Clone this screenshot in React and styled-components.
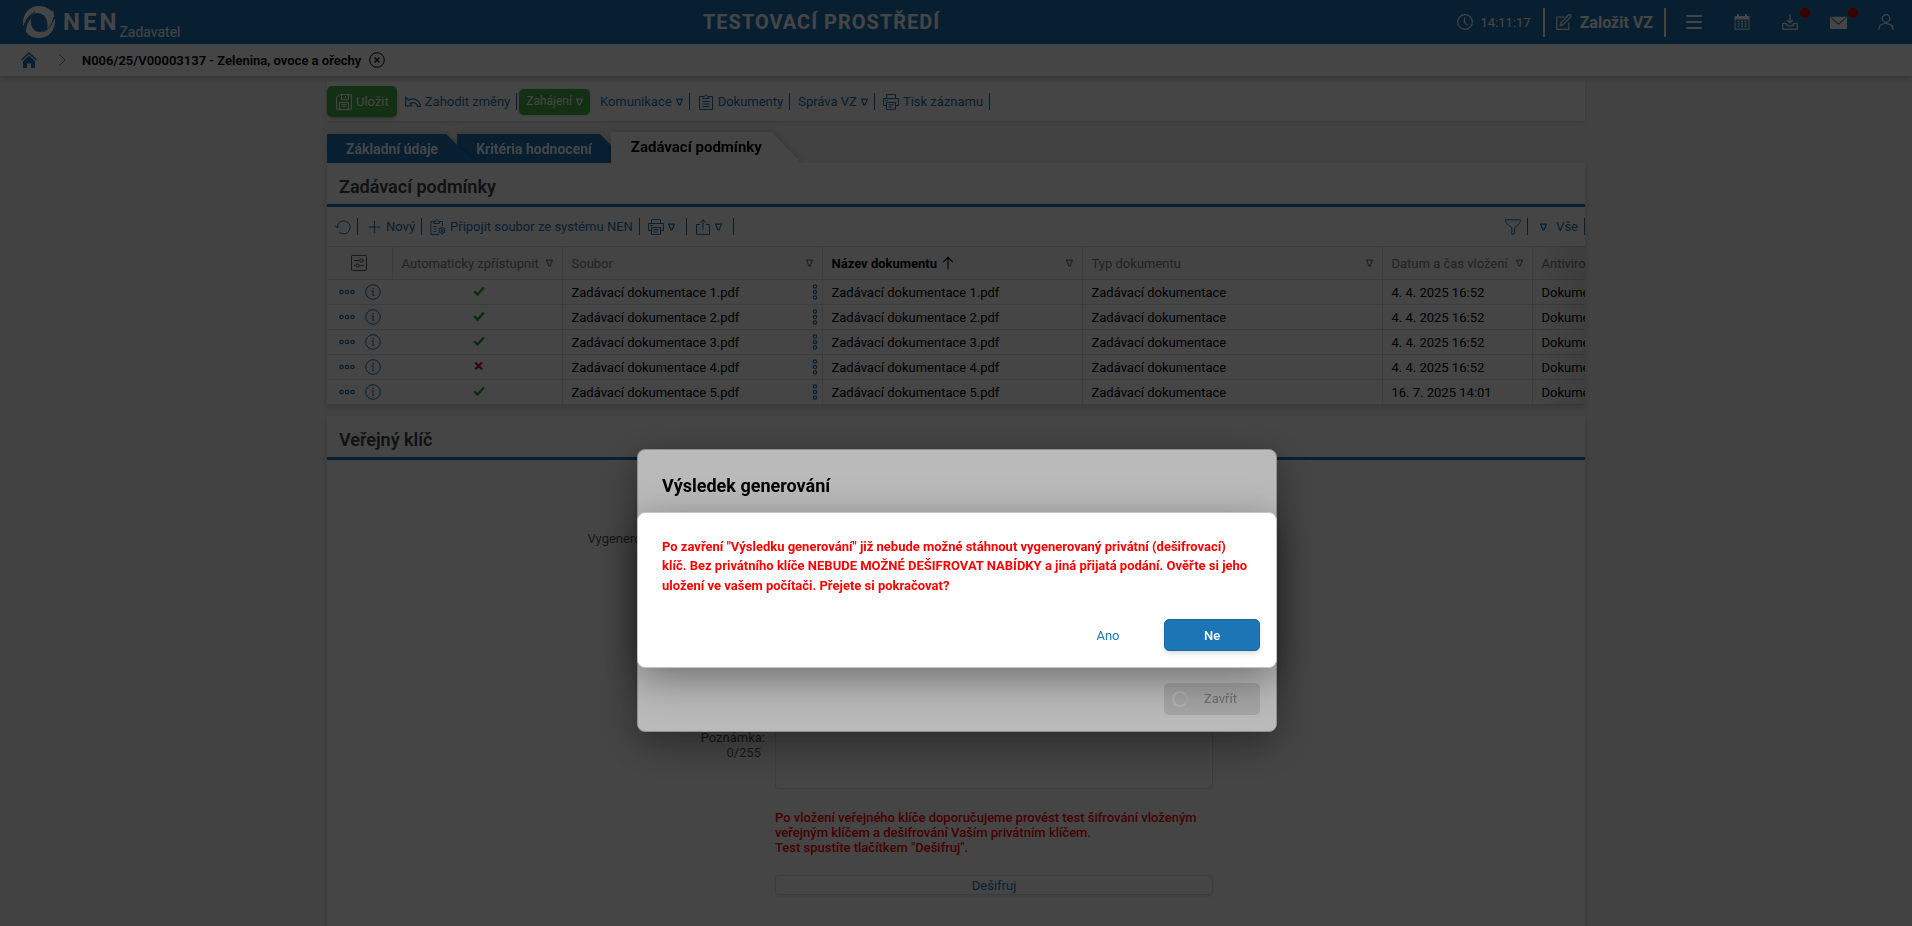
import React, { useState } from 'react';
import styled, { createGlobalStyle, css } from 'styled-components';

const COLORS = {
  BLUE: '#1c75b5',
  GREEN: '#48ad4c',
  RED: '#ff0000',
  WHITE: '#ffffff',
  PAGE: '#f2f2f2',
  LINE: '#dedede',
  GRAY: '#7d7d7d',
  HEADING: '#3c4247',
};

const DOCUMENTS = [
  { id: 1, name: 'Zadávací dokumentace 1.pdf', shared: true, date: '4. 4. 2025 16:52' },
  { id: 2, name: 'Zadávací dokumentace 2.pdf', shared: true, date: '4. 4. 2025 16:52' },
  { id: 3, name: 'Zadávací dokumentace 3.pdf', shared: true, date: '4. 4. 2025 16:52' },
  { id: 4, name: 'Zadávací dokumentace 4.pdf', shared: false, date: '4. 4. 2025 16:52' },
  { id: 5, name: 'Zadávací dokumentace 5.pdf', shared: true, date: '16. 7. 2025 14:01' },
];

const TABS = ['Základní údaje', 'Kritéria hodnocení', 'Zadávací podmínky'];

const Icon = ({ size = 16, children, ...rest }) => (
  <svg
    width={size}
    height={size}
    viewBox="0 0 16 16"
    fill="none"
    stroke="currentColor"
    strokeWidth="1"
    aria-hidden="true"
    {...rest}
  >
    {children}
  </svg>
);

const Triangle = () => (
  <svg width="7" height="8" viewBox="0 0 7 8" fill="none" stroke="currentColor" aria-hidden="true">
    <path d="M.6 1.200h5.800L4.100 6.800H2.900z" strokeWidth="1.200" />
  </svg>
);

const LogoIcon = () => (
  <svg width="32" height="32" viewBox="0 0 32 32" fill="currentColor" aria-hidden="true">
    <path d="M0 20C-1 8 6 0 16 0c6 0 11 3 13 6l1-2c3 10-2 17-6 20 2-10-2-16-9-17C8 7 4 12 0 20z" />
    <path d="M32 12c1 12-6 20-16 20-6 0-11-3-13-6 0-4 1-8 5-14-1 8 2 13 8 14 7 0 12-5 16-14z" />
    <path d="M1 21C3 13 7 8 12 6" fill="none" stroke={COLORS.BLUE} />
    <path d="M31 11c-2 8-6 13-11 15" fill="none" stroke={COLORS.BLUE} />
  </svg>
);

const ClockIcon = () => (
  <Icon strokeWidth="1.200">
    <circle cx="8" cy="8" r="7.3" />
    <path d="M7.5 3.5v4.8l3 3" />
  </Icon>
);

const EditIcon = () => (
  <Icon strokeWidth="1.200">
    <path d="M8.5 3H.8v12.3h12V8.5" />
    <path d="M5 8.6 12.6 1c.6-.5 1.4-.5 2 0s.6 1.400 0 2L7 10.700l-2.700.8z" />
  </Icon>
);

const MenuIcon = () => (
  <Icon strokeWidth="2" strokeLinecap="round">
    <path d="M1 2h14M1 8h14M1 14h14" />
  </Icon>
);

const CalendarIcon = () => (
  <Icon>
    <path d="M1 2.500h14v12.700H1z" />
    <path d="M1 3.500h14M1 4.500h14M4 0v3M12 0v3" strokeWidth="2" />
    <path
      d="M3.500 7.500h2M7 7.500h2M10.500 7.500h2M3.500 10h2M7 10h2M10.500 10h2M3.500 12.500h2M7 12.500h2M10.500 12.500h2"
      strokeWidth="1.500"
    />
  </Icon>
);

const DownloadIcon = () => (
  <Icon strokeWidth="1.200">
    <path d="M8 .5v8.500M5.300 6.200 8 9l2.700-2.800" />
    <path d="M4 9.500H.8v5.700h14.400V9.500H12c-.5 1.800-2 2.500-4 2.500s-3.500-.7-4-2.500z" />
  </Icon>
);

const MailIcon = () => (
  <Icon size={17}>
    <rect x="0" y="2.500" width="16" height="11.500" rx="1" fill="currentColor" stroke="none" />
    <path d="m1 3.500 7 6 7-6" stroke={COLORS.BLUE} />
  </Icon>
);

const UserIcon = () => (
  <Icon strokeWidth="1.200">
    <circle cx="8" cy="4.500" r="3.800" />
    <path d="M.8 16c0-4 2.700-6.500 7.200-6.500s7.200 2.500 7.200 6.500" />
  </Icon>
);

const HomeIcon = () => (
  <Icon>
    <path d="M.5 8 8 1l7.500 7" strokeWidth="1.500" />
    <path d="M2 9.200 8 3.600l6 5.600V16H10v-4.500H6V16H2z" fill="currentColor" stroke="none" />
  </Icon>
);

const ChevronIcon = () => (
  <Icon>
    <path d="m5 2 6 6-6 6" />
  </Icon>
);

const CloseIcon = () => (
  <Icon>
    <circle cx="8" cy="8" r="7.300" />
    <path d="m5.500 5.500 5 5m0-5-5 5" strokeWidth="1.200" />
  </Icon>
);

const SaveIcon = () => (
  <Icon>
    <path d="M3.500.6h11.900v14.800H.6V3.500z" />
    <path d="M5.500.6v5h7v-5M9.500 2v2M3.500 15.400V8.500h9v6.900M5.500 10.500h5M5.500 12.500h5" />
  </Icon>
);

const UndoIcon = () => (
  <Icon strokeWidth="1.200">
    <path d="M.6 3.500v8.500h5.900L5 9.500c3.500-2 6.700-.8 7.800 3h2.600C14.800 6 8.500 3 3.400 6.200z" />
  </Icon>
);

const ClipboardIcon = () => (
  <Icon>
    <path d="M5 2.500H1.500v13h13v-13H11M5 4.500v-2h1.500C6.500.3 9.500.3 9.500 2.500H11v2z" />
    <path d="M4.500 7.500h7M4.500 10h7M4.500 12.500h7" />
  </Icon>
);

const AttachIcon = () => (
  <Icon>
    <path d="M4 2.500H.8v13H9M12.500 7V2.500H9.500M4 4.500v-2h1.200C5.200.3 8.300.3 8.300 2.500h1.200v2z" />
    <path d="M3.500 7.500h3M3.500 10h3M3.500 12.500h3" />
    <circle cx="12" cy="11.500" r="2.800" />
    <circle cx="12" cy="11.500" r="1" />
    <path d="M12 7.500v8M8.500 9.500l7 4M8.500 13.500l7-4" strokeDasharray="1.500 5 1.500 5" />
  </Icon>
);

const PrintIcon = () => (
  <Icon>
    <path d="M3.500 4.500V.6h9v3.900M3.500 11.500H.6v-7h14.800v7h-2.900M3.500 8.500h9v6.900h-9z" />
    <path d="M5.500 10.700h5M5.500 12.900h4M2.500 6.500h2" />
  </Icon>
);

const RefreshIcon = () => (
  <Icon>
    <path d="M2.200 8.500a6.500 6.500 0 1 1 2 4.600" />
    <path d="M0 6.500 2.300 9l2.500-2.200" />
  </Icon>
);

const PlusIcon = () => (
  <Icon>
    <path d="M8.500 2v12M2.500 8h12" />
  </Icon>
);

const ShareIcon = () => (
  <Icon>
    <path d="M5 5.500H1.500v9.900h13V5.500H11M8 11V.8M5 3.800l3-3 3 3" />
  </Icon>
);

const FilterIcon = () => (
  <Icon>
    <path d="M.6.800h14.800v1.500C14.500 5.500 11 7.500 9.700 8.500v6l-2.900 1v-7C5 7.300 1.500 5.500.6 2.300z" />
  </Icon>
);

const SettingsIcon = () => (
  <Icon color="#555">
    <rect x=".5" y=".5" width="15" height="15" rx="1" />
    <path d="M3 5.500h5.500M12.500 5.500h.5M3 10.500h1.500M8.500 10.500H13" />
    <circle cx="10.500" cy="5.500" r="1.600" />
    <circle cx="6.500" cy="10.500" r="1.600" />
  </Icon>
);

const DotsIcon = () => (
  <Icon strokeWidth="1.200">
    <circle cx="2.500" cy="8" r="1.700" />
    <circle cx="8" cy="8" r="1.700" />
    <circle cx="13.500" cy="8" r="1.700" />
  </Icon>
);

const InfoIcon = () => (
  <Icon>
    <circle cx="8" cy="8" r="7.300" />
    <path d="M6.500 6.800h1.800l-.6 4.500h1.600" />
    <circle cx="8.200" cy="4.500" r=".8" fill="currentColor" stroke="none" />
  </Icon>
);

const CheckIcon = () => (
  <Icon size={12} color="#28a020" strokeWidth="3">
    <path d="m1.500 7 4.500 4.500L14.500 2" />
  </Icon>
);

const CrossIcon = () => (
  <Icon size={12} color="#d02020" strokeWidth="3">
    <path d="m3 2 9 9M12 2l-9 9" />
  </Icon>
);

export default function App() {
  const [activeTab, setActiveTab] = useState(2);
  const [note, setNote] = useState('');
  const [confirmOpen, setConfirmOpen] = useState(true);
  const [resultOpen, setResultOpen] = useState(true);

  const handleConfirm = () => {
    setConfirmOpen(false);
    setResultOpen(false);
  };

  return (
    <Page>
      <GlobalStyle />
      <Header>
        <Brand href="#">
          <LogoIcon />
          <BrandName>NEN</BrandName>
          <BrandRole>Zadavatel</BrandRole>
        </Brand>
        <Environment>TESTOVACÍ PROSTŘEDÍ</Environment>
        <HeaderActions>
          <Clock>
            <ClockIcon />
            14:11:17
          </Clock>
          <CreateButton type="button">
            <EditIcon />
            Založit VZ
          </CreateButton>
          <HeaderButton type="button" aria-label="Menu">
            <MenuIcon />
          </HeaderButton>
          <HeaderButton type="button" aria-label="Kalendář">
            <CalendarIcon />
          </HeaderButton>
          <HeaderButton type="button" aria-label="Stažené soubory">
            <DownloadIcon />
            <Badge />
          </HeaderButton>
          <HeaderButton type="button" aria-label="Zprávy">
            <MailIcon />
            <Badge />
          </HeaderButton>
          <HeaderButton type="button" aria-label="Uživatel">
            <UserIcon />
          </HeaderButton>
        </HeaderActions>
      </Header>

      <Breadcrumb aria-label="Drobečková navigace">
        <HomeLink href="#" aria-label="Domů">
          <HomeIcon />
        </HomeLink>
        <Separator>
          <ChevronIcon />
        </Separator>
        <Current>N006/25/V00003137 - Zelenina, ovoce a ořechy</Current>
        <PlainButton type="button" aria-label="Zavřít záznam">
          <CloseIcon />
        </PlainButton>
      </Breadcrumb>

      <Main>
        <RecordToolbar>
          <SaveButton type="button">
            <SaveIcon />
            Uložit
          </SaveButton>
          <ToolButton type="button">
            <UndoIcon />
            Zahodit změny
          </ToolButton>
          <Divider />
          <StartButton type="button">
            Zahájení
            <Triangle />
          </StartButton>
          <ToolButton type="button">
            Komunikace
            <Triangle />
          </ToolButton>
          <Divider />
          <ToolButton type="button">
            <ClipboardIcon />
            Dokumenty
          </ToolButton>
          <Divider />
          <ToolButton type="button">
            Správa VZ
            <Triangle />
          </ToolButton>
          <Divider />
          <ToolButton type="button">
            <PrintIcon />
            Tisk záznamu
          </ToolButton>
          <Divider />
        </RecordToolbar>

        <Tabs role="tablist">
          {TABS.map((tab, index) => (
            <TabShadow key={tab} $order={index === activeTab ? 10 : TABS.length - index}>
              <Tab
                type="button"
                role="tab"
                aria-selected={index === activeTab}
                $active={index === activeTab}
                onClick={() => setActiveTab(index)}
              >
                {tab}
              </Tab>
            </TabShadow>
          ))}
        </Tabs>

        <Panel>
          <PanelTitle>Zadávací podmínky</PanelTitle>
          <TableToolbar>
            <ToolButton type="button" aria-label="Obnovit">
              <RefreshIcon />
            </ToolButton>
            <Divider />
            <ToolButton type="button">
              <PlusIcon />
              Nový
            </ToolButton>
            <Divider />
            <ToolButton type="button">
              <AttachIcon />
              Připojit soubor ze systému NEN
            </ToolButton>
            <Divider />
            <ToolButton type="button" aria-label="Tisk" $wide>
              <PrintIcon />
              <Triangle />
            </ToolButton>
            <Divider />
            <ToolButton type="button" aria-label="Export" $wide>
              <ShareIcon />
              <Triangle />
            </ToolButton>
            <Divider />
            <Spacer />
            <ToolButton type="button" aria-label="Filtr">
              <FilterIcon />
            </ToolButton>
            <Divider />
            <ViewButton type="button">
              <Triangle />
              Vše
            </ViewButton>
            <Divider />
          </TableToolbar>
          <TableScroll>
            <Table>
              <colgroup>
                <col width="65" />
                <col width="170" />
                <col width="260" />
                <col width="260" />
                <col width="300" />
                <col width="150" />
                <col width="180" />
              </colgroup>
              <thead>
                <tr>
                  <HeadCell>
                    <Centered>
                      <SettingsIcon />
                    </Centered>
                  </HeadCell>
                  <HeadCell>
                    <HeadContent>
                      Automaticky zpřístupnit
                      <Triangle />
                    </HeadContent>
                  </HeadCell>
                  <HeadCell>
                    <HeadContent>
                      Soubor
                      <Triangle />
                    </HeadContent>
                  </HeadCell>
                  <HeadCell>
                    <HeadContent>
                      <Sorted>
                        Název dokumentu
                        <Icon size={14}>
                          <path d="M8 15.500V1.500M2.500 7 8 1.500 13.500 7" strokeWidth="1.200" />
                        </Icon>
                      </Sorted>
                      <Triangle />
                    </HeadContent>
                  </HeadCell>
                  <HeadCell>
                    <HeadContent>
                      Typ dokumentu
                      <Triangle />
                    </HeadContent>
                  </HeadCell>
                  <HeadCell>
                    <HeadContent>
                      Datum a čas vložení
                      <Triangle />
                    </HeadContent>
                  </HeadCell>
                  <HeadCell>
                    <HeadContent>
                      Antivirová kontrola
                      <Triangle />
                    </HeadContent>
                  </HeadCell>
                </tr>
              </thead>
              <tbody>
                {DOCUMENTS.map((doc) => (
                  <tr key={doc.id}>
                    <Cell>
                      <RowActions>
                        <PlainButton type="button" aria-label="Akce">
                          <DotsIcon />
                        </PlainButton>
                        <PlainButton type="button" aria-label="Detail">
                          <InfoIcon />
                        </PlainButton>
                      </RowActions>
                    </Cell>
                    <Cell>
                      <Centered>{doc.shared ? <CheckIcon /> : <CrossIcon />}</Centered>
                    </Cell>
                    <Cell>
                      <FileContent>
                        {doc.name}
                        <KebabButton type="button" aria-label="Možnosti souboru">
                          <DotsIcon />
                        </KebabButton>
                      </FileContent>
                    </Cell>
                    <Cell>{doc.name}</Cell>
                    <Cell>Zadávací dokumentace</Cell>
                    <Cell>{doc.date}</Cell>
                    <Cell>Dokument je v pořádku</Cell>
                  </tr>
                ))}
              </tbody>
            </Table>
            <TableFade />
          </TableScroll>
        </Panel>

        <KeyPanel>
          <PanelTitle>Veřejný klíč</PanelTitle>
          <KeyForm>
            <Label htmlFor="keyGenerated">Vygenerování šifrovacích klíčů:</Label>
            <TextInput id="keyGenerated" type="text" readOnly />
            <Label htmlFor="keyNote">
              Poznámka:
              <Counter>{note.length}/255</Counter>
            </Label>
            <NoteArea
              id="keyNote"
              maxLength={255}
              value={note}
              onChange={(e) => setNote(e.target.value)}
            />
            <FieldColumn>
              <Warning>
                Po vložení veřejného klíče doporučujeme provést test šifrování vloženým veřejným
                klíčem a dešifrování Vaším privátním klíčem.
                <br />
                Test spustíte tlačítkem "Dešifruj".
              </Warning>
              <DecryptButton type="button">Dešifruj</DecryptButton>
            </FieldColumn>
          </KeyForm>
        </KeyPanel>
      </Main>

      {resultOpen && (
        <Backdrop $shade="0.633">
          <ResultDialog role="dialog" aria-labelledby="resultTitle">
            <DialogTitle id="resultTitle">Výsledek generování</DialogTitle>
            <DialogActions>
              <BusyButton type="button" disabled>
                <Spinner />
                Zavřít
              </BusyButton>
            </DialogActions>
          </ResultDialog>
        </Backdrop>
      )}
      {confirmOpen && (
        <Backdrop $shade="0.27">
          <Dialog role="alertdialog" aria-describedby="confirmText">
            <DialogText id="confirmText">
              Po zavření "Výsledku generování" již nebude možné stáhnout vygenerovaný privátní
              (dešifrovací) klíč. Bez privátního klíče NEBUDE MOŽNÉ DEŠIFROVAT NABÍDKY a jiná
              přijatá podání. Ověřte si jeho uložení ve vašem počítači. Přejete si pokračovat?
            </DialogText>
            <DialogActions>
              <DialogButton type="button" onClick={handleConfirm}>
                Ano
              </DialogButton>
              <PrimaryButton type="button" onClick={() => setConfirmOpen(false)}>
                Ne
              </PrimaryButton>
            </DialogActions>
          </Dialog>
        </Backdrop>
      )}
    </Page>
  );
}

const GlobalStyle = createGlobalStyle`
  * {
    box-sizing: border-box;
  }

  body {
    margin: 0;
    overflow: hidden;
    background: ${COLORS.PAGE};
    color: #000;
    font: 13px/15px Roboto, sans-serif;
  }

  button, input, textarea {
    font: inherit;
  }

  svg {
    display: block;
    flex: none;
  }
`;

const Page = styled.div`
  display: flex;
  flex-direction: column;
  min-height: 100vh;
`;

const Header = styled.header`
  display: grid;
  grid-template-columns: 1fr auto 1fr;
  align-items: center;
  height: 44px;
  padding: 0 2px 0 23px;
  background: ${COLORS.BLUE};
  color: ${COLORS.WHITE};
`;

const Brand = styled.a`
  display: flex;
  align-items: center;
  color: inherit;
  text-decoration: none;
`;

const BrandName = styled.strong`
  padding-left: 8px;
  font-size: 24px;
  line-height: 32px;
  letter-spacing: 3px;
`;

const BrandRole = styled.span`
  align-self: flex-end;
  font-size: 14px;
  line-height: 8px;
  padding-bottom: 2px;
`;

const Environment = styled.strong`
  padding-right: 290px;
  font-size: 20px;
  line-height: 24px;
  letter-spacing: 1px;
`;

const HeaderActions = styled.div`
  display: flex;
  align-items: center;
  justify-content: flex-end;
`;

const Clock = styled.span`
  display: flex;
  align-items: center;
  gap: 8px;
  padding-right: 12px;
`;

const PlainButton = styled.button`
  display: flex;
  padding: 0;
  border: 0;
  background: none;
  color: inherit;
  cursor: pointer;
`;

const CreateButton = styled(PlainButton)`
  align-items: center;
  gap: 8px;
  height: 29px;
  padding: 0 11px;
  margin-right: 4px;
  border: solid ${COLORS.WHITE};
  border-width: 0 2px;
  font-size: 16px;
  font-weight: bold;
`;

const HeaderButton = styled(PlainButton)`
  position: relative;
  align-items: center;
  justify-content: center;
  width: 48px;
  height: 44px;
`;

const Badge = styled.span`
  position: absolute;
  top: 8px;
  right: 4px;
  width: 10px;
  height: 10px;
  border-radius: 50%;
  background: #d60000;
`;

const Breadcrumb = styled.nav`
  display: flex;
  align-items: center;
  height: 32px;
  padding: 0 21px;
  background: ${COLORS.WHITE};
  box-shadow: 0 2px 6px rgba(0, 0, 0, 0.2);
`;

const HomeLink = styled.a`
  color: ${COLORS.BLUE};
`;

const Separator = styled.span`
  padding: 0 12px 0 17px;
  color: ${COLORS.GRAY};
`;

const Current = styled.span`
  padding-right: 8px;
  font-weight: 600;
`;

const Main = styled.main`
  display: flex;
  flex: 1;
  flex-direction: column;
  width: 100%;
  max-width: 1258px;
  margin: 0 auto;
  padding-top: 6px;
`;

const RecordToolbar = styled.div`
  display: flex;
  align-items: center;
  height: 39px;
  background: ${COLORS.WHITE};
  box-shadow: 0 1px 2px rgba(0, 0, 0, 0.15);
`;

const ToolButton = styled(PlainButton)`
  align-items: center;
  gap: 4px;
  height: 31px;
  padding: 0 ${({ $wide }) => ($wide ? '11px' : '6px')} 0 8px;
  color: ${COLORS.BLUE};
  white-space: nowrap;
`;

const ViewButton = styled(ToolButton)`
  gap: 9px;
  padding-left: 12px;
`;

const SaveButton = styled(ToolButton)`
  padding: 0 8px 0 9px;
  border-radius: 5px;
  background: ${COLORS.GREEN};
  box-shadow: 0 2px 3px rgba(0, 0, 0, 0.25);
  color: ${COLORS.WHITE};
`;

const StartButton = styled(ToolButton)`
  height: 26px;
  margin: 0 2px;
  padding: 0 7px;
  border-radius: 5px;
  background: ${COLORS.GREEN};
  box-shadow: 0 0 2px rgba(0, 0, 0, 0.25);
  color: ${COLORS.WHITE};
  font-size: 12px;
`;

const Divider = styled.span`
  flex: none;
  width: 1px;
  height: 17px;
  background: ${COLORS.BLUE};
`;

const Spacer = styled.span`
  flex: 1;
`;

const Tabs = styled.div`
  display: flex;
  align-items: flex-end;
  height: 31px;
  margin-top: 11px;
`;

const TabShadow = styled.div`
  position: relative;
  z-index: ${({ $order }) => $order};
  margin-right: -18px;
  filter: drop-shadow(1px 0 3px rgba(0, 0, 0, 0.2));
`;

const Tab = styled.button`
  display: block;
  height: 29px;
  padding: 2px 37px 0 19px;
  border: 0;
  background: ${COLORS.BLUE};
  color: ${COLORS.WHITE};
  clip-path: polygon(0 0, calc(100% - 29px) 0, 100% 100%, 0 100%);
  font-weight: bold;
  font-size: 14px;
  cursor: pointer;

  ${({ $active }) =>
    $active &&
    css`
      height: 31px;
      padding: 0 39px 0 20px;
      background: ${COLORS.WHITE};
      color: #000;
      font-size: 15px;
    `}
`;

const Panel = styled.section`
  position: relative;
  z-index: 11;
  margin-bottom: 11px;
  background: ${COLORS.WHITE};
  box-shadow: 0 3px 5px rgba(0, 0, 0, 0.12);
`;

const KeyPanel = styled(Panel)`
  flex: 1;
  margin-bottom: 0;
`;

const PanelTitle = styled.h2`
  margin: 0;
  padding: 14px 12px 7px;
  border-bottom: 3px solid ${COLORS.BLUE};
  color: ${COLORS.HEADING};
  font-size: 18px;
  font-weight: 600;
  line-height: 20px;
`;

const TableToolbar = styled.div`
  display: flex;
  align-items: center;
  height: 39px;
`;

const TableScroll = styled.div`
  position: relative;
  overflow: hidden;
`;

const TableFade = styled.div`
  position: absolute;
  top: 0;
  right: 0;
  bottom: 0;
  width: 48px;
  background: linear-gradient(to right, transparent, rgba(0, 0, 0, 0.1));
`;

const Table = styled.table`
  width: 1385px;
  table-layout: fixed;
  border-collapse: collapse;
`;

const HeadCell = styled.th`
  height: 33px;
  padding: 0 9px;
  border: solid ${COLORS.LINE};
  border-width: 1px 1px 1px 0;
  background: #fafafa;
  color: ${COLORS.GRAY};
  font-weight: normal;
  text-align: left;
  white-space: nowrap;
`;

const Cell = styled.td`
  height: 25px;
  padding: 0 4px 0 9px;
  border: solid ${COLORS.LINE};
  border-width: 0 1px 1px 0;
  white-space: nowrap;

  &:first-child {
    border-right: 0;
  }
`;

const HeadContent = styled.div`
  display: flex;
  align-items: center;
  justify-content: space-between;
`;

const Sorted = styled.strong`
  display: flex;
  align-items: center;
  gap: 4px;
  color: #000;
`;

const Centered = styled.div`
  display: flex;
  justify-content: center;
`;

const RowActions = styled.div`
  display: flex;
  gap: 10px;
  padding-left: 3px;
  color: ${COLORS.BLUE};
`;

const FileContent = styled.div`
  display: flex;
  align-items: center;
  justify-content: space-between;
`;

const KebabButton = styled(PlainButton)`
  width: 6px;
  justify-content: center;
  color: ${COLORS.BLUE};
  transform: rotate(90deg);
`;

const KeyForm = styled.form`
  display: grid;
  grid-template-columns: 438px 438px;
  column-gap: 10px;
  padding-top: 71px;
`;

const Label = styled.label`
  color: #555;
  text-align: right;
`;

const Counter = styled.span`
  display: block;
  padding-right: 4px;
`;

const TextInput = styled.input`
  height: 24px;
  margin-bottom: 175px;
  border: 1px solid ${COLORS.LINE};
  border-radius: 4px;
`;

const NoteArea = styled.textarea`
  height: 59px;
  padding: 4px;
  border: 1px solid ${COLORS.LINE};
  border-radius: 4px;
  resize: none;
`;

const FieldColumn = styled.div`
  display: flex;
  grid-column: 2;
  flex-direction: column;
  gap: 20px;
  padding: 21px 0 24px;
`;

const Warning = styled.p`
  margin: 0;
  color: ${COLORS.RED};
  font-weight: 500;
`;

const DecryptButton = styled.button`
  height: 20px;
  padding: 0;
  border: 1px solid ${COLORS.LINE};
  border-radius: 4px;
  background: ${COLORS.WHITE};
  box-shadow: 0 2px 3px rgba(0, 0, 0, 0.08);
  color: ${COLORS.BLUE};
  cursor: pointer;
`;

const Backdrop = styled.div`
  position: fixed;
  inset: 0;
  z-index: 20;
  display: flex;
  align-items: center;
  justify-content: center;
  padding: 254px 0 0 2px;
  background: rgba(0, 0, 0, ${({ $shade }) => $shade});
`;

const Dialog = styled.div`
  display: flex;
  flex-direction: column;
  width: 640px;
  padding: 24px 16px 16px 24px;
  border: 1px solid #c4c4c4;
  border-radius: 8px;
  background: ${COLORS.WHITE};
  box-shadow: 0 11px 40px rgba(0, 0, 0, 0.4);
`;

const ResultDialog = styled(Dialog)`
  justify-content: space-between;
  min-height: 283px;
`;

const DialogTitle = styled.h2`
  margin: 0;
  font-size: 18px;
  font-weight: bold;
  line-height: 24px;
`;

const DialogText = styled.p`
  margin: 0;
  padding-right: 8px;
  color: ${COLORS.RED};
  font-weight: bold;
  line-height: 1.5;
`;

const DialogActions = styled.div`
  display: flex;
  justify-content: flex-end;
  gap: 8px;
  padding-top: 24px;
`;

const DialogButton = styled.button`
  width: 96px;
  height: 32px;
  border: 0;
  border-radius: 5px;
  background: none;
  color: ${COLORS.BLUE};
  cursor: pointer;
`;

const PrimaryButton = styled(DialogButton)`
  border: 1px solid #1a68a0;
  background: ${COLORS.BLUE};
  box-shadow: 0 3px 5px rgba(0, 0, 0, 0.12);
  color: ${COLORS.WHITE};
  font-weight: 500;
`;

const BusyButton = styled(DialogButton)`
  display: flex;
  align-items: center;
  gap: 16px;
  padding: 0 8px;
  background: #e1e1e1;
  color: #949494;
`;

const Spinner = styled.span`
  width: 16px;
  height: 16px;
  border: 2px solid #f5f5f5;
  border-right-color: #ebebeb;
  border-radius: 50%;
`;
